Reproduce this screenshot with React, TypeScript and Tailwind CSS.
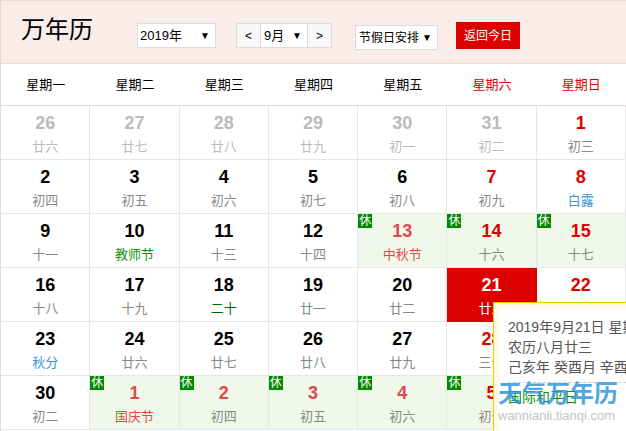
import React from "react";

type Cell = {
  d: string;
  l: string;
  n: string;
  lc: string;
  rest?: boolean;
  today?: boolean;
};

const N = "text-black";
const R = "text-[#dd0000]";
const H = "text-[#e24848]";
const G = "text-[#bbbbbb]";
const L = "text-[#888888]";
const LB = "text-[#3d95d6]";
const LG = "text-[#0a900a]";
const LDG = "text-[#006600]";

const c = (d: string, l: string, n = N, lc = L, rest = false, today = false): Cell => ({ d, l, n, lc, rest, today });

const cells: Cell[] = [
  c("26", "廿六", G, G), c("27", "廿七", G, G), c("28", "廿八", G, G), c("29", "廿九", G, G), c("30", "初一", G, G), c("31", "初二", G, G), c("1", "初三", R, L),
  c("2", "初四"), c("3", "初五"), c("4", "初六"), c("5", "初七"), c("6", "初八"), c("7", "初九", R), c("8", "白露", R, LB),
  c("9", "十一"), c("10", "教师节", N, LG), c("11", "十三"), c("12", "十四"), c("13", "中秋节", H, H, true), c("14", "十六", R, L, true), c("15", "十七", R, L, true),
  c("16", "十八"), c("17", "十九"), c("18", "二十", N, LDG), c("19", "廿一"), c("20", "廿二"), c("21", "廿三", "text-white", "text-white", false, true), c("22", "廿四", R),
  c("23", "秋分", N, LB), c("24", "廿六"), c("25", "廿七"), c("26", "廿八"), c("27", "廿九"), c("28", "三十", R), c("29", "初一", R),
  c("30", "初二"), c("1", "国庆节", H, H, true), c("2", "初四", H, L, true), c("3", "初五", H, L, true), c("4", "初六", H, L, true), c("5", "初七", R, L, true), c("6", "初八", R, L, true),
];

const weekdays = ["星期一", "星期二", "星期三", "星期四", "星期五", "星期六", "星期日"];

function Arrow() {
  return <span className="text-[10px] leading-none text-black">▼</span>;
}

export default function App() {
  return (
    <div className="relative w-[626px] h-[431px] overflow-hidden bg-white border-l border-[#f2d4d4] [font-family:'Liberation_Sans','Noto_Sans_CJK_SC',sans-serif]">
      {/* header */}
      <div className="h-[64px] bg-[#faece9] border-t border-b border-[#f2d6d6] flex items-start">
        <div className="w-[136px] pl-[20px] pt-[17px] text-[24px] leading-[24px] text-black">万年历</div>
        <div className="mt-[22px] w-[79px] h-[25px] border border-[#dcdcdc] bg-white flex items-center justify-between pl-[2px] pr-[5px] text-[13px] text-black">
          <span>2019年</span>
          <Arrow />
        </div>
        <div className="ml-[20px] mt-[22px] w-[96px] h-[25px] border border-[#dcdcdc] bg-white flex text-black">
          <div className="w-[23px] h-full bg-[#f7f7f7] flex items-center justify-center text-[12px]">&lt;</div>
          <div className="w-[48px] h-full border-x border-[#dcdcdc] bg-white flex items-center justify-between pl-[3px] pr-[5px] text-[13px]">
            <span>9月</span>
            <Arrow />
          </div>
          <div className="flex-1 h-full bg-[#f7f7f7] flex items-center justify-center text-[12px]">&gt;</div>
        </div>
        <div className="ml-[23px] mt-[24px] w-[83px] h-[25px] border border-[#dcdcdc] bg-white flex items-center justify-between pl-[3px] pr-[5px] text-[12px] text-black">
          <span>节假日安排</span>
          <Arrow />
        </div>
        <div className="ml-[18px] mt-[21px] w-[64px] h-[27px] bg-[#dd0000] flex items-center justify-center text-[12px] text-white">返回今日</div>
      </div>

      {/* weekdays */}
      <div className="grid grid-cols-7 h-[42px] border-b border-[#f2d6d6]">
        {weekdays.map((w, i) => (
          <div key={w} className={`flex items-center justify-center text-[13px] ${i >= 5 ? "text-[#e00000]" : "text-black"}`}>
            {w}
          </div>
        ))}
      </div>

      {/* days */}
      <div className="grid grid-cols-7">
        {cells.map((cl, i) => (
          <div
            key={i}
            className={`relative h-[54px] border-r border-b flex flex-col items-center ${
              cl.today ? "bg-[#dd0000] border-[#dd0000]" : cl.rest ? "bg-[#f0f8ea] border-[#e6e6e6]" : "bg-white border-[#e6e6e6]"
            }`}
          >
            {cl.rest && (
              <div className="absolute left-0 top-0 w-[14px] h-[14px] bg-[#008a00] text-white text-[12px] leading-[14px] text-center">休</div>
            )}
            <div className={`mt-[7px] h-[20px] leading-[20px] text-[18px] font-bold ${cl.n}`}>{cl.d}</div>
            <div className={`mt-[5px] h-[18px] leading-[18px] text-[13px] ${cl.lc}`}>{cl.l}</div>
          </div>
        ))}
      </div>

      {/* tooltip */}
      <div className="absolute left-[492px] top-[302px] w-[220px] h-[150px] border border-[#ffc400] bg-[#fffbe3] p-[5px]">
        <div className="h-full bg-white pl-[9px] pt-[9px] text-[14px] leading-[20px] text-[#555555] whitespace-nowrap">
          <div>2019年9月21日 星期六</div>
          <div>农历八月廿三</div>
          <div>己亥年 癸酉月 辛酉日</div>
          <div className="mt-[5px] border-t border-dashed border-[#cccccc] pt-[4px] text-[#079007]">国际和平日</div>
        </div>
      </div>

      {/* watermark */}
      <div className="absolute left-[497px] top-[380px] pointer-events-none whitespace-nowrap">
        <div className="text-[24px] leading-[28px] font-bold text-[#2f96dc]/85">天气万年历</div>
        <div className="text-[13px] leading-[16px] text-[#c4c4c4]">wannianli.tianqi.com</div>
      </div>
    </div>
  );
}
